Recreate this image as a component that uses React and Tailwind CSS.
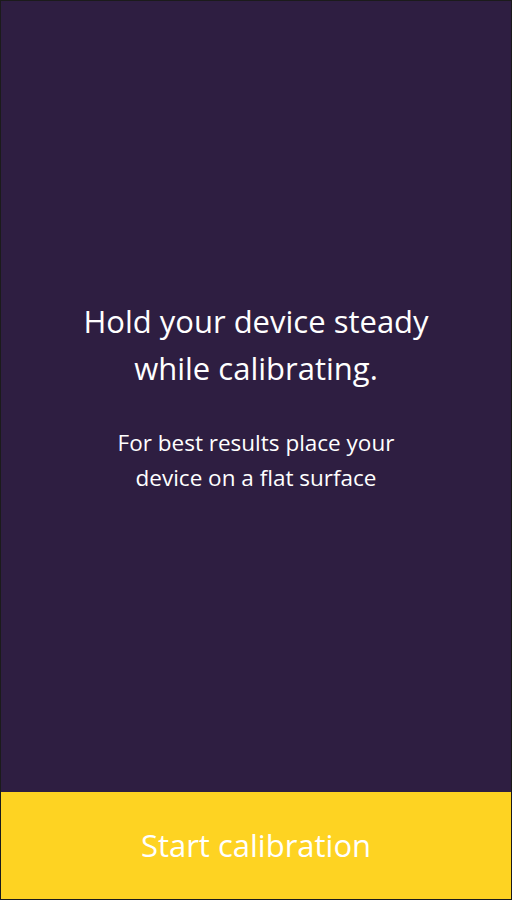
export default function App() {
  return (
    <div
      className="h-[900px] w-[512px] flex flex-col border border-[#1b1b1b] bg-[#2e1e41]"
      style={{ fontFamily: '"Open Sans", "Liberation Sans", sans-serif' }}
    >
      <div className="flex-1 flex flex-col items-center justify-center text-center text-white px-6">
        <h1 className="text-[31px] leading-[47px] font-normal whitespace-nowrap">
          Hold your device steady
          <br />
          while calibrating.
        </h1>
        <p className="mt-[33px] text-[22.5px] leading-[35px] whitespace-nowrap">
          For best results place your
          <br />
          device on a flat surface
        </p>
      </div>
      <button className="h-[107px] w-full bg-[#fed322] text-white text-[31px] font-normal">
        Start calibration
      </button>
    </div>
  );
}
